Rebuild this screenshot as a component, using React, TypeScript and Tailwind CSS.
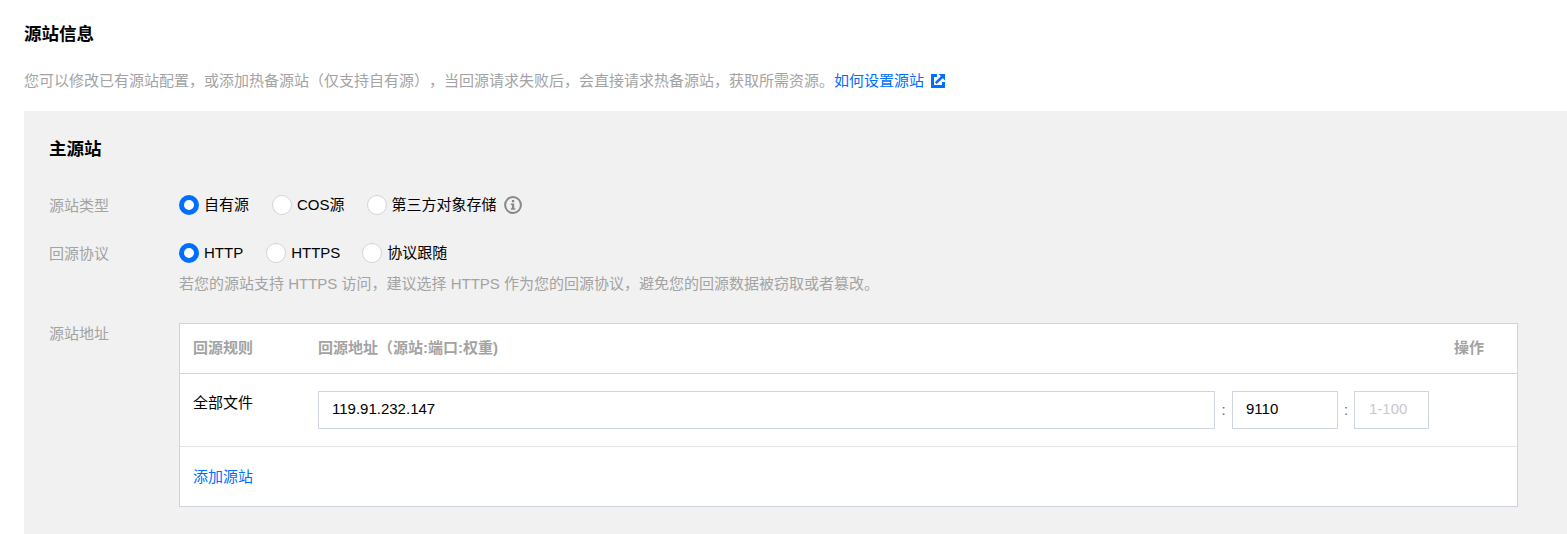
const FONT = "font-['Liberation_Sans','Noto_Sans_CJK_SC',sans-serif] [text-spacing-trim:space-all]";
const LABEL = "h-5 w-[130px] pt-[1px] text-[15px] leading-5 text-[#a3a3a3]";
const INPUT = "box-border flex h-[38px] items-center border border-[#cfd5de] pb-[2px]";

function Radio({ label, checked, gap }: { label: string; checked?: boolean; gap: string }) {
  return (
    <label className={`flex items-center ${gap}`}>
      {checked ? (
        <span className="box-border h-5 w-5 rounded-full border-[5px] border-[#006eff] bg-white" />
      ) : (
        <span className="box-border h-5 w-5 rounded-full border border-[#d0d5dd] bg-white" />
      )}
      <span className="ml-[5px] text-[15px] leading-5 text-black">{label}</span>
    </label>
  );
}

function InfoIcon() {
  return (
    <svg width="18" height="18" viewBox="0 0 18 18" className="ml-[7px]">
      <circle cx="9" cy="9" r="7.9" fill="none" stroke="#888" strokeWidth="2" />
      <rect x="7.9" y="4" width="2.3" height="2.3" fill="#888" />
      <path d="M6.8 7.6h3.4v4.7h1.1v1.5H6.8v-1.5h1.1V9.1H6.8z" fill="#888" />
    </svg>
  );
}

function LinkIcon() {
  return (
    <svg width="14" height="14" viewBox="0 0 14 14" className="ml-[7px]">
      <path d="M6 1.5H1.5v11h11V8" fill="none" stroke="#006eff" strokeWidth="3" />
      <path d="M4.8 9.2 11 3" fill="none" stroke="#006eff" strokeWidth="2.6" />
      <path d="M7.6 0H14v6.4z" fill="#006eff" />
    </svg>
  );
}

export default function App() {
  return (
    <div className={`${FONT} h-[534px] w-[1567px] overflow-hidden bg-white pl-6`}>
      <h2 className="pt-6 text-[17.5px] leading-5 font-bold text-black">源站信息</h2>
      <p className="mt-[27px] flex h-5 items-center text-[15px] leading-5 text-[#a3a3a3]">
        您可以修改已有源站配置，或添加热备源站（仅支持自有源），当回源请求失败后，会直接请求热备源站，获取所需资源。
        <a className="text-[#006eff]">如何设置源站</a>
        <LinkIcon />
      </p>

      <section className="mt-5 h-[423px] bg-[#f1f1f1] pt-7 pl-[25px]">
        <h3 className="text-[17.5px] leading-5 font-bold text-black">主源站</h3>

        <div className="mt-9 flex">
          <div className={LABEL}>源站类型</div>
          <div className="flex items-center">
            <Radio label="自有源" checked gap="mr-[23px]" />
            <Radio label="COS源" gap="mr-[22px]" />
            <Radio label="第三方对象存储" gap="" />
            <InfoIcon />
          </div>
        </div>

        <div className="mt-7 flex">
          <div className={LABEL}>回源协议</div>
          <div>
            <div className="flex items-center">
              <Radio label="HTTP" checked gap="mr-[23px]" />
              <Radio label="HTTPS" gap="mr-[22px]" />
              <Radio label="协议跟随" gap="" />
            </div>
            <p className="mt-[11px] text-[15px] leading-5 text-[#a3a3a3]">
              若您的源站支持 HTTPS 访问，建议选择 HTTPS 作为您的回源协议，避免您的回源数据被窃取或者篡改。
            </p>
          </div>
        </div>

        <div className="mt-[29px] flex">
          <div className={LABEL}>源站地址</div>
          <div className="box-border h-[184px] w-[1339px] border border-[#cfd5de] bg-white">
            <div className="flex h-[50px] items-center border-b border-[#cfd5de] text-[15px] font-bold text-[#a3a3a3]">
              <div className="w-[138px] pl-[13px]">回源规则</div>
              <div className="flex-1">回源地址（源站:端口:权重)</div>
              <div className="w-[63px]">操作</div>
            </div>
            <div className="flex h-[73px] border-b border-[#e5e5e5]">
              <div className="w-[138px] pt-[19px] pl-[13px] text-[15px] leading-5 text-black">全部文件</div>
              <div className="mt-[17px] flex h-[38px] items-center text-[15px] text-[#666]">
                <div className={`${INPUT} w-[897px] pl-[13px] text-black`}>119.91.232.147</div>
                <span className="w-[17px] text-center">:</span>
                <div className={`${INPUT} w-[106px] pl-[13px] text-black`}>9110</div>
                <span className="w-[16px] text-center">:</span>
                <div className={`${INPUT} w-[75px] pl-[14px] text-[#c9c9c9]`}>1-100</div>
              </div>
            </div>
            <div className="pt-5 pl-[13px] text-[15px] leading-5 text-[#006eff]">添加源站</div>
          </div>
        </div>
      </section>
    </div>
  );
}
